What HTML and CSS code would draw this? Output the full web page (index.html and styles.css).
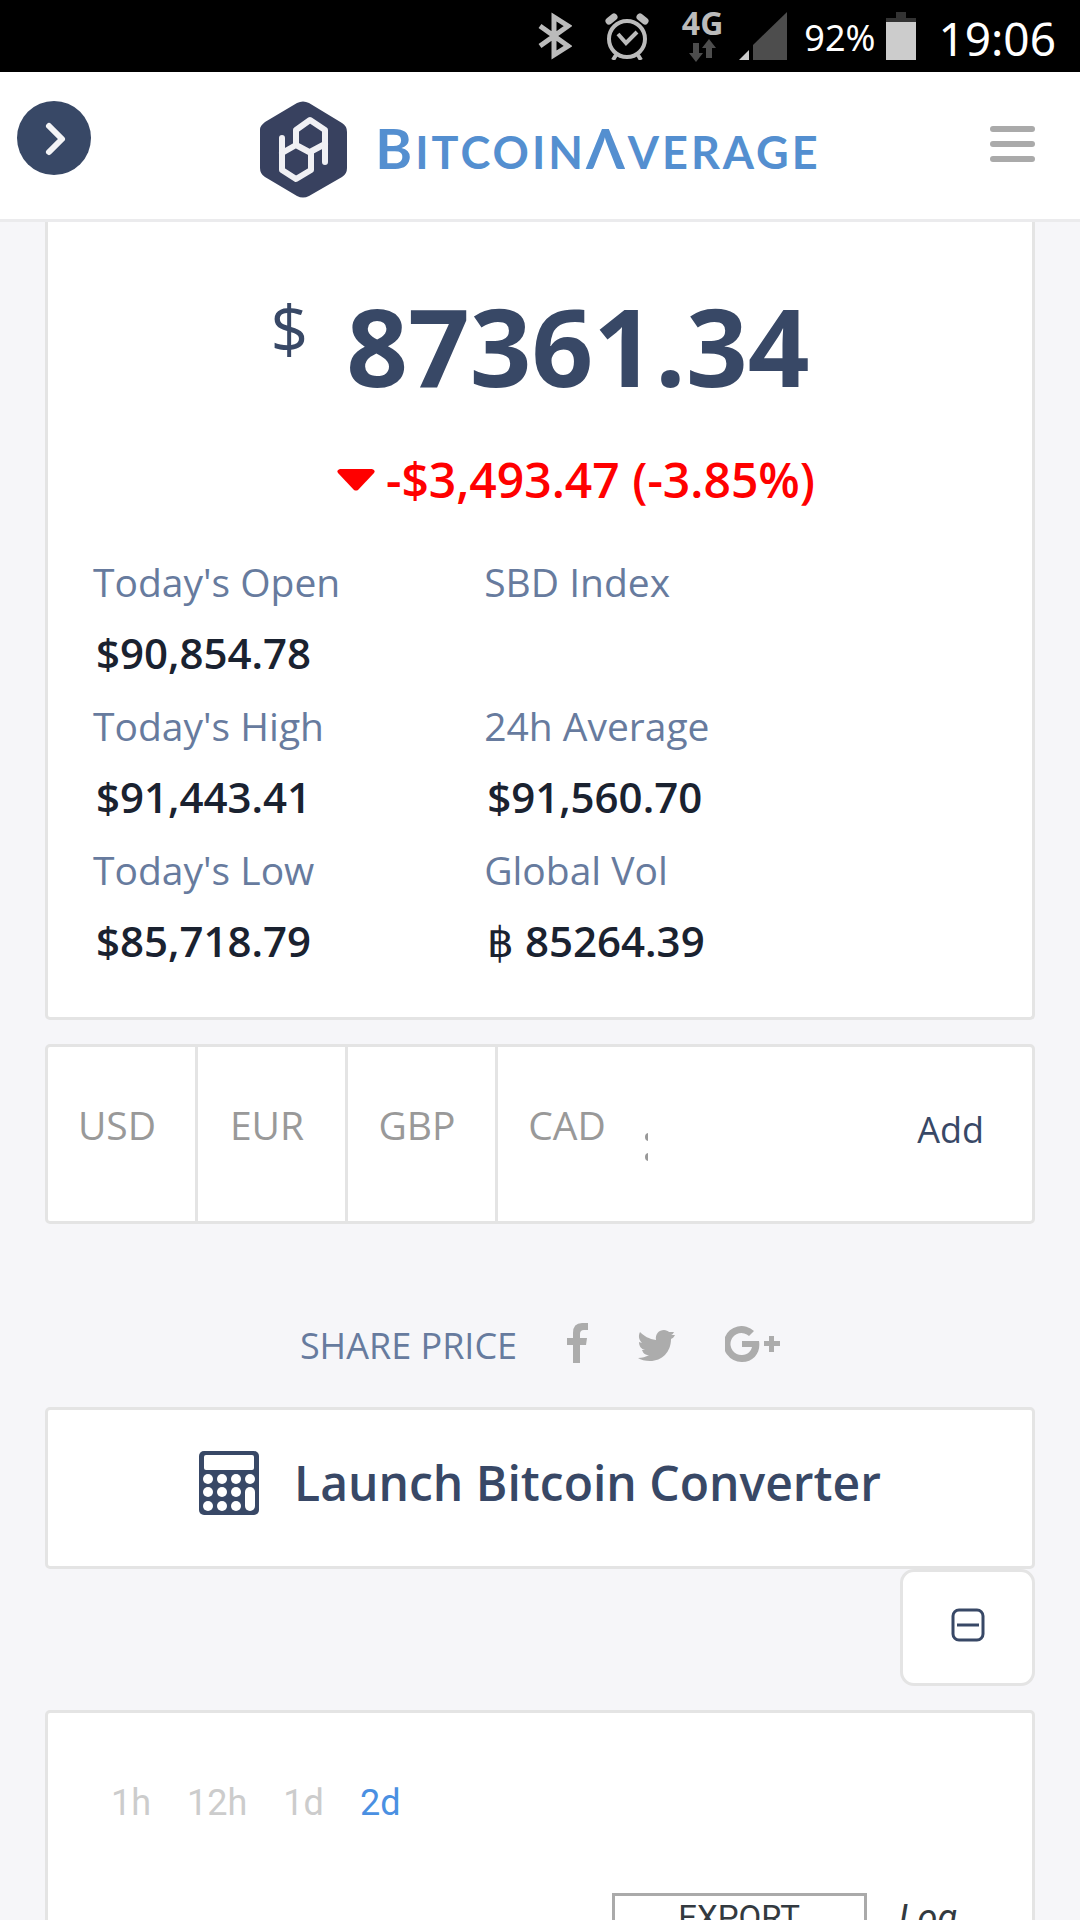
FILE: index.html
```html
<!DOCTYPE html>
<html lang="en">
<head>
    <meta charset="UTF-8">
    <meta name="viewport" content="width=device-width, initial-scale=1.0">
    <title>BitcoinAverage</title>
    <link rel="stylesheet" href="styles.css">
</head>
<body>

    <!-- Phone status bar -->
    <div class="status-bar">
        <svg class="bluetooth" width="34" height="48" viewBox="0 0 34 48" fill="none" stroke="#bbb" stroke-width="5">
            <path d="M2 14L30 34L16 43V5L30 14L2 34"/>
        </svg>
        <svg class="alarm" width="44" height="47" viewBox="0 0 44 47" fill="none" stroke="#bbb">
            <circle cx="22" cy="26" r="18" stroke-width="4"/>
            <path d="M13 21l8 9 11-11" stroke-width="4"/>
            <path d="M11 42l-3 5M33 42l3 5" stroke-width="4"/>
            <path d="M4 8l5-4M40 8l-5-4" stroke-width="7" stroke-linecap="round"/>
        </svg>
        <div class="network">
            <span>4G</span>
            <svg width="28" height="23" viewBox="0 0 28 23" fill="#4d4d4d">
                <path d="M4 4h6v10h4l-7 9-7-9h4zM17 19V9h-4l7-9 7 9h-4v10z"/>
            </svg>
        </div>
        <svg class="signal" width="48" height="48" viewBox="0 0 48 48">
            <path d="M10 38v10H0z" fill="#ccc"/>
            <path d="M48 0v48H14V33z" fill="#4d4d4d"/>
        </svg>
        <span class="percent">92%</span>
        <svg class="battery" width="30" height="48" viewBox="0 0 30 48">
            <path d="M10 0h10v6h10v4H0V6h10z" fill="#333"/>
            <path d="M0 10h30v38H0z" fill="#ccc"/>
        </svg>
        <span class="clock">19:06</span>
    </div>

    <!-- Header -->
    <header class="header">
        <button class="side-btn" aria-label="Open sidebar">
            <svg width="74" height="74" viewBox="0 0 74 74">
                <circle cx="37" cy="37" r="37" fill="#384866"/>
                <path d="M32 25l13 13-13 13" fill="none" stroke="#f4f4f6" stroke-width="6" stroke-linecap="round" stroke-linejoin="round"/>
            </svg>
        </button>
        <a class="logo" href="#">
            <svg width="87" height="97" viewBox="0 0 87 97">
                <path d="M37 2q6-3 12 0l33 20q5 3 5 9v36q0 6-5 9L49 95q-6 3-12 0L5 76q-5-3-5-9V28q0-3 5-7z" fill="#38415f"/>
                <path d="M22 37V69L36 78L51 69V52L36 44L22 52M36 44V29L50 19L65 29V61M65 43L50 51" fill="none" stroke="#f0f0f4" stroke-width="6" stroke-linecap="round" stroke-linejoin="round"/>
            </svg>
            <span class="wordmark"><b>B</b>ITCOIN<b>Λ</b>VERAGE</span>
        </a>
        <button class="menu-btn" aria-label="Menu">
            <i></i>
            <i></i>
            <i></i>
        </button>
    </header>

    <main class="content">

        <!-- Price -->
        <section class="card price-card">
            <div class="price">
                <span class="currency">$</span>
                <span class="amount">87361.34</span>
            </div>
            <div class="change">
                <svg width="38" height="22" viewBox="0 0 38 22" fill="#f00">
                    <path d="M3 0h32q4 1 2 4L21 21q-2 1-4 0L1 4q-2-3 2-4z"/>
                </svg>
                <span>-$3,493.47 (-3.85%)</span>
            </div>
            <dl class="stats">
                <div><dt>Today's Open</dt><dd>$90,854.78</dd></div>
                <div><dt>SBD Index</dt><dd></dd></div>
                <div><dt>Today's High</dt><dd>$91,443.41</dd></div>
                <div><dt>24h Average</dt><dd>$91,560.70</dd></div>
                <div><dt>Today's Low</dt><dd>$85,718.79</dd></div>
                <div><dt>Global Vol</dt><dd><span class="baht">฿</span> 85264.39</dd></div>
            </dl>
        </section>

        <!-- Currencies -->
        <section class="card currencies">
            <button>USD</button>
            <button>EUR</button>
            <button>GBP</button>
            <button>CAD</button>
            <svg class="dots" width="3" height="28" viewBox="0 0 3 28" fill="#999">
                <circle cx="4" cy="4" r="4"/>
                <circle cx="4" cy="24" r="4"/>
            </svg>
            <a class="add" href="#">Add</a>
        </section>

        <!-- Share -->
        <div class="share">
            <span>SHARE PRICE</span>
            <a href="#" aria-label="Facebook">
                <svg width="21" height="40" viewBox="0 0 21 40">
                    <path d="M21 0v7h-4q-4 0-4 4v4h7l-1 7h-6v18H6V22H0v-7h6v-5Q6 0 15 0z"/>
                </svg>
            </a>
            <a href="#" aria-label="Twitter">
                <svg width="37" height="33" viewBox="0 0 37 33">
                    <path d="M36 2c-1 2-2 3-3 3h4c-1 2-2 3-4 4C33 22 24 31 12 31 7 31 3 30 0 28c4 0 8-1 11-3-4 0-6-2-7-5h3c-4-1-6-4-6-8l3 1C1 10 0 6 2 2c4 4 9 7 16 8-1-6 3-10 8-10 2 0 4 1 5 2z"/>
                </svg>
            </a>
            <a href="#" aria-label="Google Plus">
                <svg width="55" height="37" viewBox="0 0 55 37">
                    <path d="M17 15h17c2 11-5 21-17 21a18 18 0 1 1 12-31l-5 5a11 11 0 1 0-7 19c6 0 9-4 10-8H17zM44 10h5v5h6v5h-6v6h-5v-6h-5v-5h5z"/>
                </svg>
            </a>
        </div>

        <!-- Converter -->
        <a class="card converter" href="#">
            <svg width="60" height="64" viewBox="0 0 60 64">
                <rect width="60" height="64" rx="5" fill="#384866"/>
                <g fill="#fff">
                    <rect x="5" y="4" width="50" height="15" rx="2"/>
                    <circle cx="9" cy="28" r="5"/>
                    <circle cx="23" cy="28" r="5"/>
                    <circle cx="37" cy="28" r="5"/>
                    <circle cx="51" cy="28" r="5"/>
                    <circle cx="9" cy="41" r="5"/>
                    <circle cx="23" cy="41" r="5"/>
                    <circle cx="37" cy="41" r="5"/>
                    <circle cx="9" cy="55" r="5"/>
                    <circle cx="23" cy="55" r="5"/>
                    <circle cx="37" cy="55" r="5"/>
                    <rect x="46" y="36" width="10" height="24" rx="5"/>
                </g>
            </svg>
            <span>Launch Bitcoin Converter</span>
        </a>

        <button class="collapse" aria-label="Collapse chart">
            <svg width="34" height="34" viewBox="0 0 34 34" fill="none" stroke="#384866" stroke-width="3">
                <rect x="2" y="2" width="30" height="30" rx="6"/>
                <path d="M6 17h22"/>
            </svg>
        </button>

        <!-- Chart -->
        <section class="card chart">
            <div class="ranges">
                <button>1h</button>
                <button>12h</button>
                <button>1d</button>
                <button class="active">2d</button>
            </div>
            <div class="chart-tools">
                <button class="export">EXPORT</button>
                <a class="scale" href="#">Log</a>
            </div>
        </section>

    </main>

</body>
</html>
```
FILE: styles.css
```css
* {
    margin: 0;
    padding: 0;
    box-sizing: border-box;
}

body {
    height: 100vh;
    display: flex;
    flex-direction: column;
    overflow: hidden;
    background: #f6f6f9;
    color: #384866;
    font-family: "Open Sans", "Noto Sans", sans-serif;
}

button {
    border: none;
    background: none;
    font: inherit;
    color: inherit;
    cursor: pointer;
}

a {
    color: inherit;
    text-decoration: none;
}

svg {
    display: block;
    flex-shrink: 0;
}

/* Status bar */
.status-bar {
    flex-shrink: 0;
    height: 72px;
    display: flex;
    justify-content: flex-end;
    align-items: center;
    padding-right: 24px;
    background: #000;
    color: #fff;
    font-family: "Noto Sans", sans-serif;
}

.alarm {
    margin: 0 33px;
}

.network {
    display: flex;
    flex-direction: column;
    align-items: center;
    gap: 4px;
    color: #bbb;
    font-size: 32px;
    font-weight: bold;
    line-height: 24px;
}

.signal {
    margin: 0 17px 0 16px;
}

.percent {
    padding-top: 3px;
    font-size: 36px;
    line-height: 72px;
}

.battery {
    margin: 0 22px 0 11px;
}

.clock {
    padding-top: 3px;
    font-size: 46px;
    line-height: 72px;
}

/* Header */
.header {
    flex-shrink: 0;
    height: 150px;
    display: flex;
    justify-content: space-between;
    align-items: flex-start;
    padding: 29px 45px 0 17px;
    background: #fff;
    border-bottom: 3px solid #ebebed;
}

.logo {
    display: flex;
    align-items: center;
    gap: 28px;
}

.wordmark {
    font-family: Lato, sans-serif;
    font-size: 45px;
    font-weight: 700;
    line-height: 92px;
    letter-spacing: 3px;
    color: #548fd0;
}

.wordmark b {
    font-size: 56px;
    font-weight: inherit;
}

.menu-btn {
    width: 45px;
    display: flex;
    flex-direction: column;
    gap: 9px;
    padding-top: 25px;
}

.menu-btn i {
    height: 6px;
    border-radius: 3px;
    background: #aaa;
}

/* Cards */
.content {
    flex: 1;
    display: flex;
    flex-direction: column;
    padding: 0 45px;
}

.card {
    flex-shrink: 0;
    background: #fff;
    border: 3px solid #e4e4e4;
    border-radius: 5px;
}

.price-card {
    border-top: none;
    border-radius: 0 0 5px 5px;
    padding: 54px 45px 39px;
}

.price {
    display: flex;
    justify-content: center;
    gap: 38px;
}

.currency {
    font-size: 66px;
    line-height: 102px;
}

.amount {
    font-size: 108px;
    font-weight: bold;
    line-height: 140px;
}

.change {
    display: flex;
    justify-content: center;
    align-items: center;
    gap: 11px;
    padding: 27px 0 29px 72px;
    color: #f00;
    font-size: 48px;
    font-weight: 600;
    line-height: 74px;
}

.stats {
    display: grid;
    grid-template-columns: 7fr 9fr;
    line-height: 72px;
}

.stats dt {
    color: #677b9e;
    font-size: 39px;
}

.stats dd {
    min-height: 72px;
    padding: 0 0 2px 3px;
    color: #1a2230;
    font-size: 42px;
    font-weight: 600;
    line-height: 70px;
}

.baht {
    font-weight: 400;
}

/* Currencies */
.currencies {
    height: 180px;
    display: flex;
    margin-top: 24px;
}

.currencies button {
    width: 150px;
    padding: 0 9px 20px 0;
    border-right: 3px solid #e4e4e4;
    color: #999;
    font-size: 39px;
}

.currencies button:nth-child(4) {
    border-right: none;
    width: 147px;
}

.dots {
    align-self: center;
    margin-top: 26px;
}

.add {
    margin-left: auto;
    padding-right: 48px;
    font-size: 36px;
    line-height: 166px;
}

/* Share */
.share {
    height: 183px;
    display: flex;
    justify-content: center;
    align-items: flex-end;
    padding-bottom: 43px;
    color: #677b9e;
    font-size: 36px;
    line-height: 36px;
}

.share a {
    margin-left: 50px;
    padding-bottom: 1px;
}

.share svg {
    fill: #acacac;
}

/* Converter */
.converter {
    height: 162px;
    display: flex;
    justify-content: center;
    align-items: center;
    gap: 35px;
    padding-bottom: 11px;
    font-size: 48px;
    font-weight: 600;
}

.collapse {
    flex-shrink: 0;
    align-self: flex-end;
    width: 135px;
    height: 117px;
    display: flex;
    justify-content: center;
    align-items: center;
    padding-bottom: 6px;
    background: #fff;
    border: 3px solid #e4e4e4;
    border-radius: 14px;
}

/* Chart */
.chart {
    margin-top: 24px;
    padding: 63px 75px 60px 63px;
}

.ranges {
    display: flex;
    gap: 36px;
    color: #ccc;
    font-family: Roboto, sans-serif;
    font-size: 36px;
    line-height: 54px;
}

.ranges .active {
    color: #4a90e2;
}

.chart-tools {
    display: flex;
    justify-content: flex-end;
    align-items: flex-start;
    gap: 32px;
    margin-top: 63px;
    color: #333a40;
    font-family: Roboto, sans-serif;
    font-size: 33px;
    line-height: 44px;
}

.export {
    width: 255px;
    border: 3px solid #aaa;
}

.scale {
    padding-top: 3px;
    font-size: 36px;
    font-style: italic;
}
```
